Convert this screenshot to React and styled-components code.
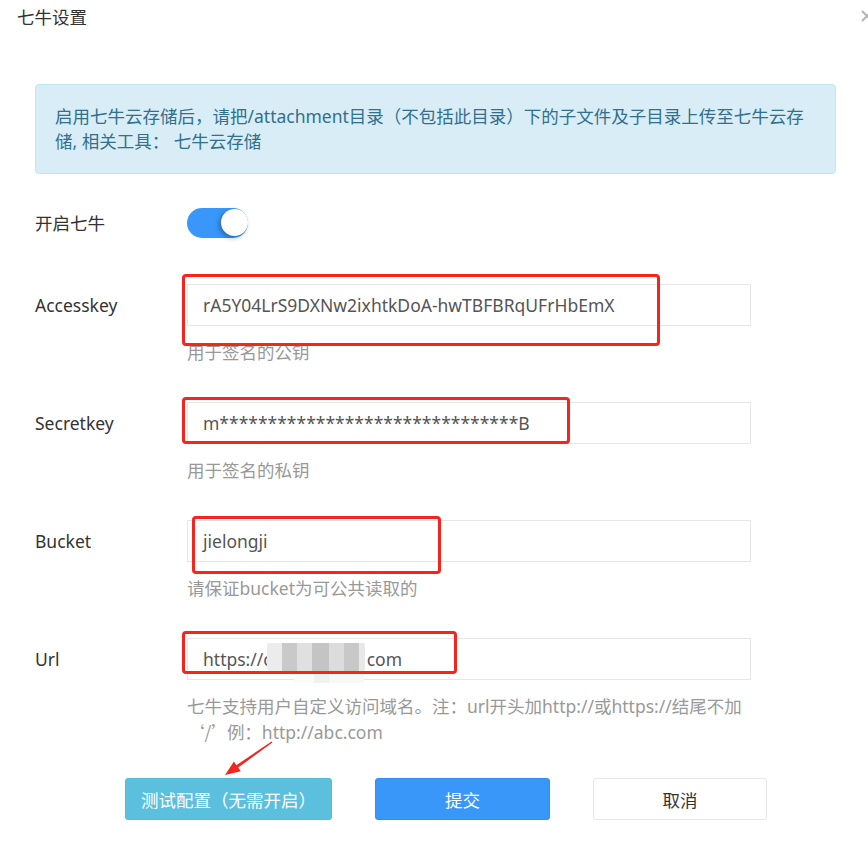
import React from "react";
import styled, { createGlobalStyle } from "styled-components";

const GlobalStyle = createGlobalStyle`
  html, body {
    margin: 0;
    padding: 0;
    background: #fff;
    overflow: hidden;
  }
  body {
    font-family: "Noto Sans", "Noto Sans CJK SC", sans-serif;
    font-size: 17.5px;
    color: #333;
  }
`;

const fields = [
  {
    label: "Accesskey",
    value: "rA5Y04LrS9DXNw2ixhtkDoA-hwTBFBRqUFrHbEmX",
    help: "用于签名的公钥",
    mark: { left: -5, top: -10, width: 478, height: 72 },
  },
  {
    label: "Secretkey",
    value: "m" + "*".repeat(31) + "B",
    help: "用于签名的私钥",
    mark: { left: -5, top: -5, width: 388, height: 47 },
  },
  {
    label: "Bucket",
    value: "jielongji",
    help: "请保证bucket为可公共读取的",
    mark: { left: 5, top: -4, width: 249, height: 58 },
  },
];

const App = () => {
  return (
    <>
      <GlobalStyle />
      <Dialog>
        <Header>
          <Title>七牛设置</Title>
          <Close>
            <svg width="14" height="14" viewBox="0 0 14 14">
              <path d="M2 2 L12 12 M12 2 L2 12" stroke="#b5b5b5" strokeWidth="2" />
            </svg>
          </Close>
        </Header>

        <Body>
          <Alert>
            启用七牛云存储后，请把/attachment目录（不包括此目录）下的子文件及子目录上传至七牛云存储, 相关工具： 七牛云存储
          </Alert>

          <ToggleRow>
            <Label $lh={30}>开启七牛</Label>
            <Switch>
              <Knob />
            </Switch>
          </ToggleRow>

          {fields.map((f) => (
            <Group key={f.label}>
              <Label>{f.label}</Label>
              <FieldWrap>
                <Field>{f.value}</Field>
                <Mark style={f.mark} />
              </FieldWrap>
              <Help>{f.help}</Help>
            </Group>
          ))}

          <Group>
            <Label>Url</Label>
            <FieldWrap>
              <Field>
                https://c
                <Mosaic width="100" height="40" viewBox="0 0 100 40">
                  <rect x="0" y="0" width="16" height="28" rx="3" fill="#ececec" />
                  <rect x="15" y="0" width="15" height="28" fill="#c9c9c9" />
                  <rect x="30" y="0" width="15" height="28" fill="#e0e0e0" />
                  <rect x="45" y="0" width="17" height="28" fill="#c4c4c4" />
                  <rect x="62" y="0" width="15" height="28" fill="#dcdcdc" />
                  <rect x="77" y="0" width="15" height="28" fill="#c8c8c8" />
                  <rect x="92" y="0" width="6" height="28" rx="2" fill="#e8e8e8" />
                  <rect x="27" y="28" width="20" height="12" fill="#fbfbfb" />
                  <rect x="47" y="28" width="15" height="12" fill="#f1f1f1" />
                  <rect x="62" y="28" width="35" height="12" fill="#f8f8f8" />
                </Mosaic>
                com
              </Field>
              <Mark style={{ left: -5, top: -7, width: 275, height: 43 }} />
            </FieldWrap>
            <Help>
              七牛支持用户自定义访问域名。注：url开头加http://或https://结尾不加
              <br />
              <Quote>‘/’</Quote>例：http://abc.com
            </Help>
          </Group>

          <Buttons>
            <Arrow width="60" height="44" viewBox="0 0 60 44">
              <polygon
                points="51.6,4.5 52.4,5.5 18.2,30.6 20.8,34.3 5,38 13.9,24.5 16.4,28.2"
                fill="#f5241c"
              />
            </Arrow>
            <Button $variant="info" $width={207}>测试配置（无需开启）</Button>
            <Button $variant="primary" $width={175}>提交</Button>
            <Button $variant="default" $width={174}>取消</Button>
          </Buttons>
        </Body>
      </Dialog>
    </>
  );
};

export default App;

const Dialog = styled.div`
  width: 868px;
  height: 843px;
  overflow: hidden;
`;

const Header = styled.div`
  height: 32px;
  display: flex;
  align-items: center;
  justify-content: space-between;
  padding-left: 17px;
`;

const Title = styled.div`
  font-size: 17.5px;
  color: #333;
`;

const Close = styled.div`
  display: flex;
  margin-right: -6px;
`;

const Body = styled.div`
  padding: 52px 32px 0 35px;
`;

const Alert = styled.div`
  width: 761px;
  padding: 19px;
  border: 1px solid #bce8f1;
  border-radius: 4px;
  background: #d9edf7;
  color: #31708f;
  line-height: 25px;
`;

const ToggleRow = styled.div`
  display: grid;
  grid-template-columns: 152px auto;
  align-items: center;
  margin-top: 34px;
  height: 30px;
`;

const Label = styled.div`
  color: #333;
  line-height: ${(p) => p.$lh || 42}px;
`;

const Switch = styled.div`
  position: relative;
  width: 61px;
  height: 30px;
  border-radius: 15px;
  background: #3897f8;
`;

const Knob = styled.div`
  position: absolute;
  right: 0;
  top: 1px;
  width: 27px;
  height: 27px;
  border-radius: 50%;
  background: #fff;
  box-shadow: -2px 2px 5px rgba(0, 0, 0, 0.3);
`;

const Group = styled.div`
  display: grid;
  grid-template-columns: 152px 564px;
  margin-top: 37px;

  ${ToggleRow} + & {
    margin-top: 46px;
  }
`;

const FieldWrap = styled.div`
  position: relative;
`;

const Field = styled.div`
  box-sizing: border-box;
  height: 42px;
  display: flex;
  align-items: center;
  padding: 0 15px;
  border: 1px solid #e6e6e6;
  color: #555;
  white-space: pre;
`;

const Mosaic = styled.svg`
  margin: 7px 0 0 -5px;
  flex-shrink: 0;
`;

const Mark = styled.div`
  position: absolute;
  box-sizing: border-box;
  border: 3px solid #f5241c;
  border-radius: 4px;
  pointer-events: none;
`;

const Help = styled.div`
  grid-column: 2;
  margin-top: 14px;
  line-height: 25px;
  color: #999;
`;

const Quote = styled.span`
  font-family: "Noto Sans CJK SC", sans-serif;
  margin-right: -2px;
`;

const Buttons = styled.div`
  position: relative;
  display: flex;
  gap: 43px;
  padding-left: 90px;
  margin-top: 33px;
`;

const Arrow = styled.svg`
  position: absolute;
  left: 185px;
  top: -41px;
`;

const variants = {
  info: { bg: "#5bc0de", border: "#52bcdc", color: "#fff" },
  primary: { bg: "#3897f8", border: "#3190f2", color: "#fff" },
  default: { bg: "#fff", border: "#e8e8e8", color: "#333" },
};

const Button = styled.button`
  box-sizing: border-box;
  width: ${(p) => p.$width}px;
  height: 42px;
  border-radius: 3px;
  border: 1px solid ${(p) => variants[p.$variant].border};
  background: ${(p) => variants[p.$variant].bg};
  color: ${(p) => variants[p.$variant].color};
  font-family: inherit;
  font-size: 17.5px;
  padding: 0;
`;
